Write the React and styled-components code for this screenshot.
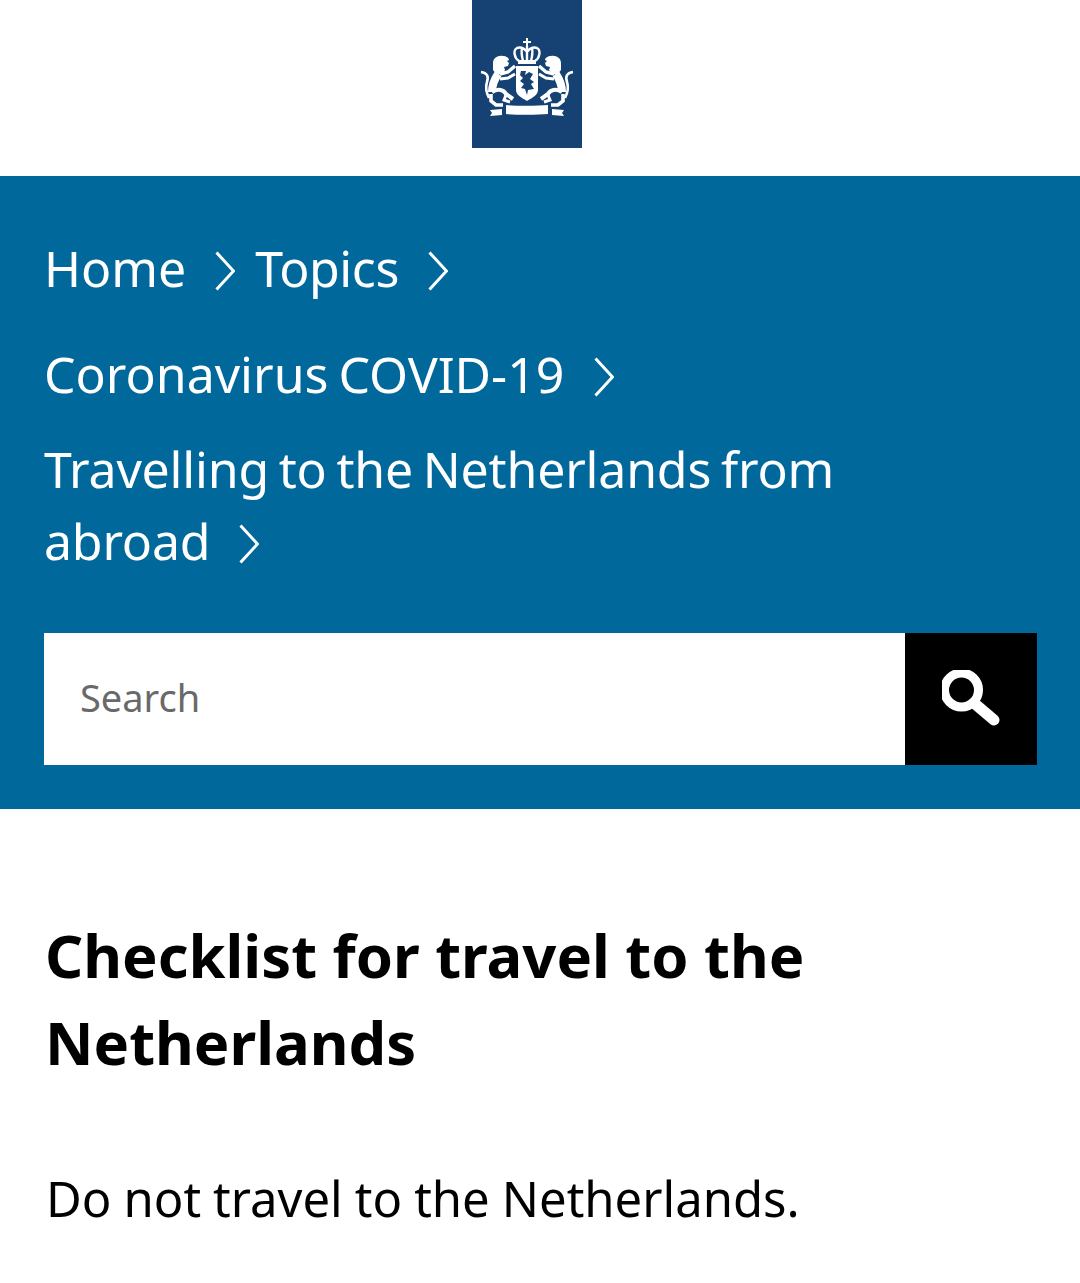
import React from "react";
import styled, { createGlobalStyle } from "styled-components";

const GlobalStyle = createGlobalStyle`
  html, body {
    margin: 0;
    padding: 0;
    background: #fff;
    font-family: "Noto Sans", "Open Sans", sans-serif;
  }
`;

const Page = styled.div`
  width: 1080px;
  height: 1283px;
  overflow: hidden;
  background: #fff;
`;

const TopBar = styled.header`
  height: 176px;
  padding-left: 472px;
  box-sizing: border-box;
`;

const Logo = styled.div`
  width: 110px;
  height: 148px;
  background: #154273;
  display: flex;
  justify-content: center;
  padding-top: 38px;
  box-sizing: border-box;
`;

const Hero = styled.section`
  background: #01689b;
  padding: 56px 43px 44px 44px;
  height: 633px;
  box-sizing: border-box;
`;

const Crumbs = styled.nav`
  display: flex;
  flex-direction: column;
  margin-bottom: 56px;
`;

const CrumbRow = styled.div`
  display: flex;
  margin-top: ${(p) => p.$top || 0}px;
  max-width: 880px;
`;

const Crumb = styled.a`
  display: block;
  color: #fff;
  font-size: 50px;
  line-height: 72px;
  word-spacing: -3px;
  letter-spacing: ${(p) => p.$tracking || 0}px;
  margin-left: ${(p) => p.$offset || 0}px;
`;

const Chevron = styled.svg`
  display: inline-block;
  width: 20px;
  height: 40px;
  margin-left: ${(p) => p.$gap || 30}px;
  vertical-align: -4px;
  fill: none;
  stroke: #fff;
  stroke-width: 3;
`;

const SearchBar = styled.form`
  display: flex;
  height: 132px;
  margin: 0;
`;

const SearchInput = styled.div`
  flex: 1;
  background: #fff;
  color: #696969;
  font-size: 38px;
  padding-left: 36px;
  padding-bottom: 4px;
  box-sizing: border-box;
  display: flex;
  align-items: center;
`;

const SearchButton = styled.div`
  width: 132px;
  background: #000;
  display: flex;
  align-items: center;
  justify-content: center;
`;

const Content = styled.main`
  padding: 102px 44px 0 46px;
`;

const Title = styled.h1`
  margin: 0 0 0 -1px;
  color: #000;
  font-size: 59.7px;
  line-height: 87px;
  font-weight: 700;
  max-width: 800px;
`;

const Lead = styled.p`
  margin: 77px 0 0;
  color: #000;
  font-size: 49px;
  line-height: 72px;
  word-spacing: -0.7px;
`;

const ChevronIcon = ({ gap }) => (
  <Chevron $gap={gap} viewBox="0 0 20 40">
    <path d="M1.5 1.5 L18.5 20 L1.5 38.5" />
  </Chevron>
);

const Lion = () => (
  <g fill="none" stroke="#fff">
    {/* head and mane */}
    <path
      fill="#fff"
      stroke="none"
      d="M13 25c0-5 5-8 10-7 3 0 6 2 6 4l-2 1 2 2-1 3-4 1 1 3-3 4-5 1-4-5z"
    />
    <path d="M18 36C14 42 12 48 12 54" strokeWidth="8" />
    {/* tail */}
    <path d="M1 34C7 35 9 38 7 44C5 50 6 54 9 60" strokeWidth="2.6" />
    {/* raised forelegs */}
    <path d="M20 36L28 34L35 28" strokeWidth="3.4" />
    <path d="M20 41L28 40L35 36" strokeWidth="3" />
    {/* hind legs */}
    <path d="M12 54C18 50 24 52 26 56L33 61" strokeWidth="4" />
    <path d="M11 56L11 63L16 67L23 67" strokeWidth="3.6" />
    <path d="M26 57L24 62L30 64" strokeWidth="3" />
  </g>
);

const Crest = () => (
  <svg width="94" height="80" viewBox="0 0 94 80" fill="#fff">
    {/* crown */}
    <path d="M46 0h2v3h3v2h-3v3h-2V5h-3V3h3z" />
    <path
      fill="none"
      stroke="#fff"
      strokeWidth="2.4"
      d="M39 23c-5-3-6-11-2-13 3-1 7 0 10 4 3-4 7-5 10-4 4 2 3 10-2 13M47 8v15M42 10c-1 4 0 9 1 13M52 10c1 4 0 9-1 13"
    />
    <path d="M38 22h18v4H38z" />
    {/* shield */}
    <path d="M36 28h22v24c0 5-6 8-11 11-5-3-11-6-11-11z" />
    <path
      fill="#154273"
      d="M41 33h5l-1 4 4-3 4 2-3 5 4 3-3 2 3 5-6 1-1 5-2-6-4-1 3-4-4-3 3-3-3-3z"
    />
    <Lion />
    <g transform="matrix(-1 0 0 1 94 0)">
      <Lion />
    </g>
    {/* ribbon */}
    <path d="M26 67c10 1 32 1 42 0v9c-10 1-32 1-42 0z" />
    <path d="M10 72l12-1v6l-12 1 2-3zM84 72l-12-1v6l12 1-2-3z" />
  </svg>
);

const SearchIcon = () => (
  <svg width="58" height="58" viewBox="0 0 58 58" fill="none" stroke="#fff">
    <circle cx="19.5" cy="20" r="17" strokeWidth="9" />
    <path d="M32 33L52 50" strokeWidth="11" strokeLinecap="round" />
  </svg>
);

export default function App() {
  return (
    <Page>
      <GlobalStyle />
      <TopBar>
        <Logo>
          <Crest />
        </Logo>
      </TopBar>
      <Hero>
        <Crumbs>
          <CrumbRow>
            <Crumb>
              Home
              <ChevronIcon gap={29} />
            </Crumb>
            <Crumb $offset={20} $tracking={-0.4}>
              Topics
              <ChevronIcon gap={29} />
            </Crumb>
          </CrumbRow>
          <CrumbRow $top={34}>
            <Crumb>
              Coronavirus COVID-19
              <ChevronIcon />
            </Crumb>
          </CrumbRow>
          <CrumbRow $top={23}>
            <Crumb $tracking={-0.2}>
              Travelling to the Netherlands from abroad
              <ChevronIcon gap={29} />
            </Crumb>
          </CrumbRow>
        </Crumbs>
        <SearchBar>
          <SearchInput>Search</SearchInput>
          <SearchButton>
            <SearchIcon />
          </SearchButton>
        </SearchBar>
      </Hero>
      <Content>
        <Title>Checklist for travel to the Netherlands</Title>
        <Lead>Do not travel to the Netherlands.</Lead>
      </Content>
    </Page>
  );
}
